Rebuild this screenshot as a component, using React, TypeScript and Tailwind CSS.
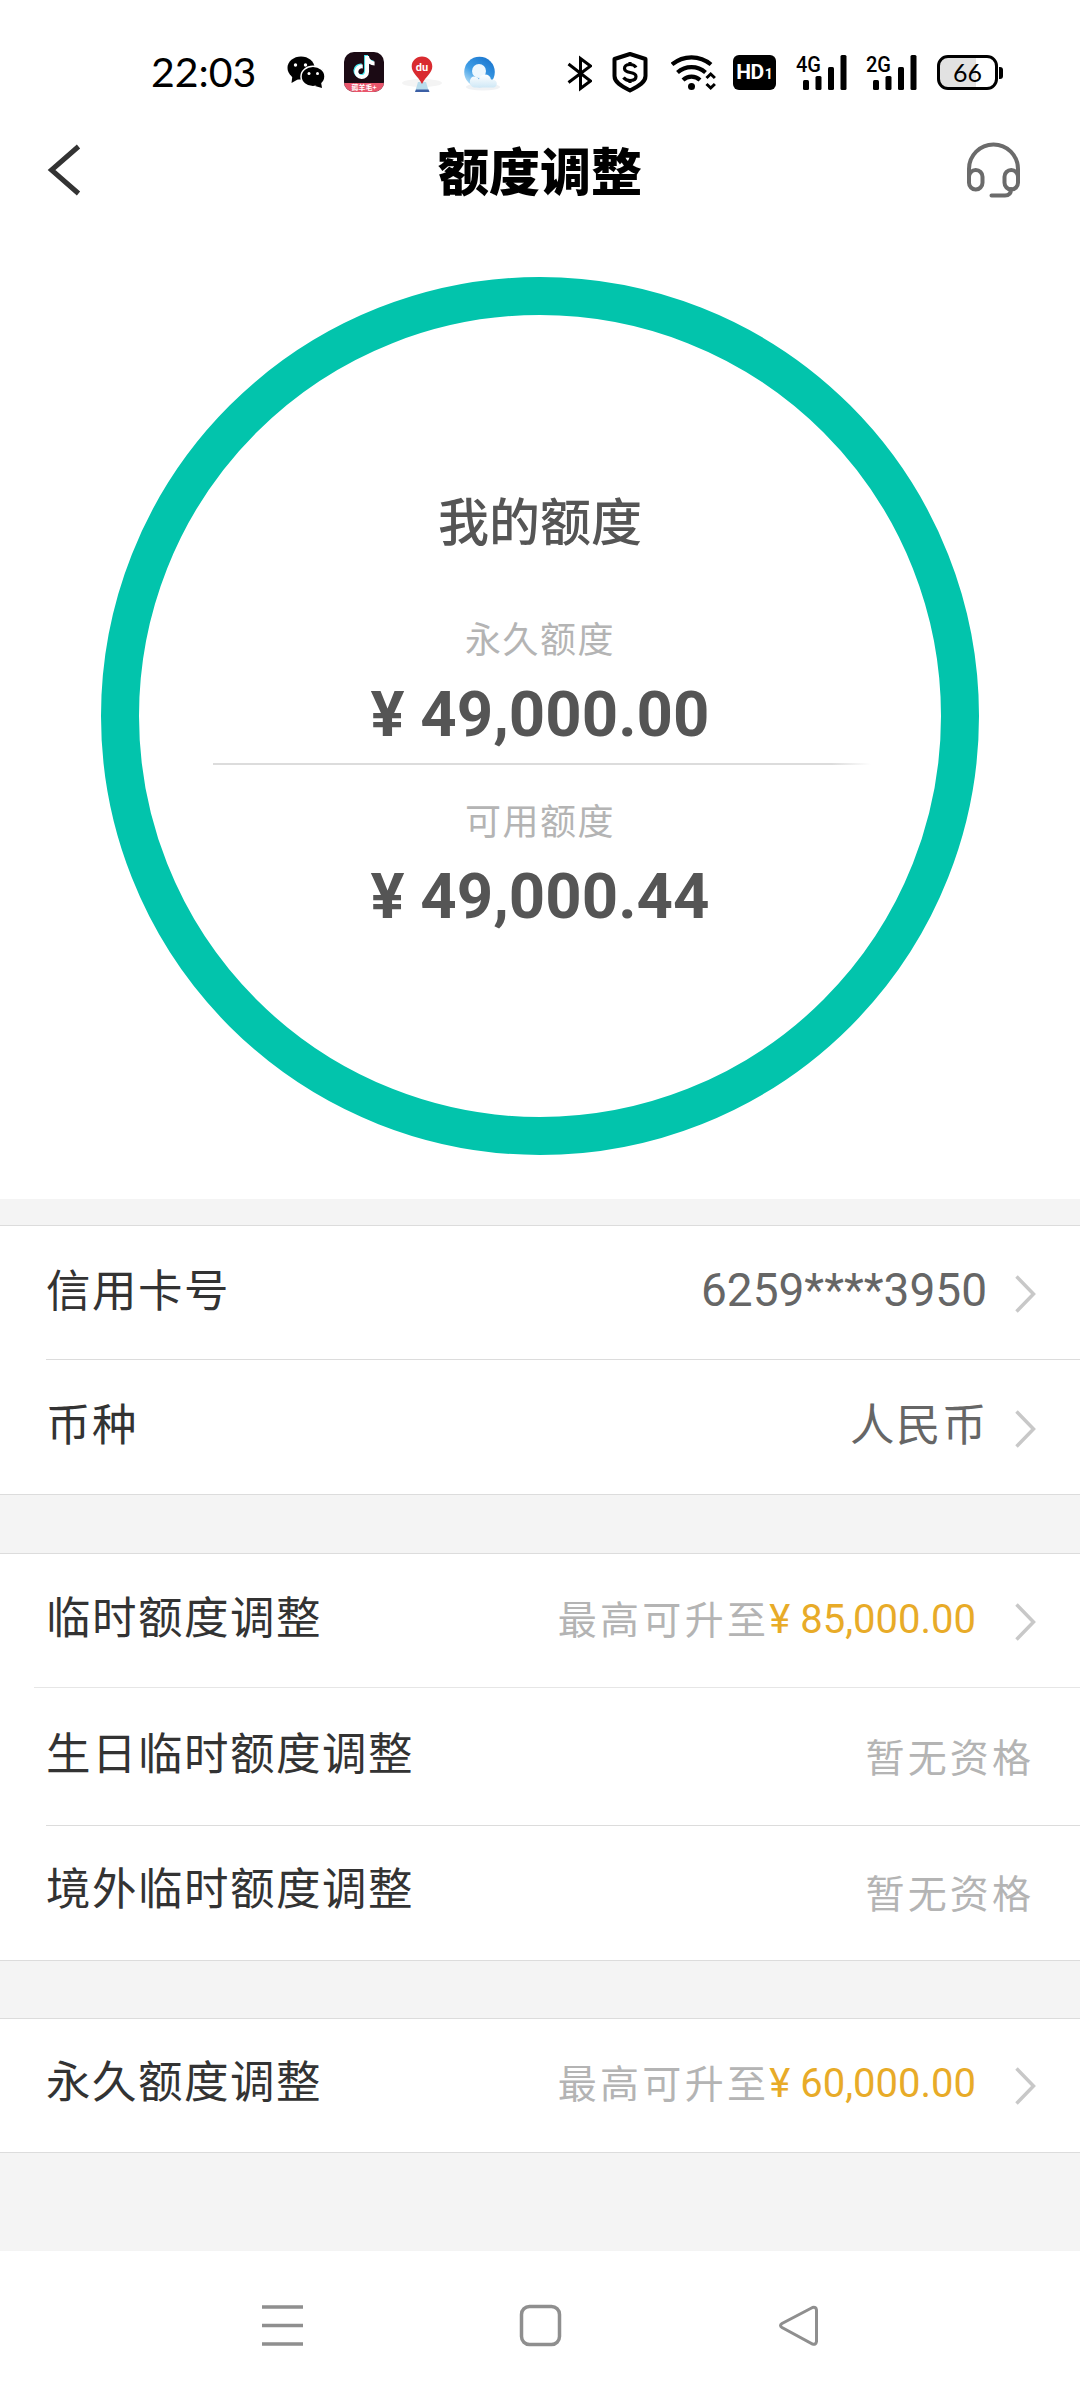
import type { ReactNode } from "react";
import { FaTiktok } from "react-icons/fa";

interface RowProps {
  label: string;
  children: ReactNode;
  arrow?: boolean;
  className?: string;
}

function SignalIcon({ label }: { label: string }) {
  return (
    <svg className="h-11 w-[52px]" viewBox="0 50 52 44">
      <text x="0" y="72" fontFamily="Roboto" fontSize="22" fontWeight="500" textLength="25" lengthAdjust="spacingAndGlyphs">
        {label}
      </text>
      <rect x="7" y="80" width="6" height="10" rx="1.5" />
      <rect x="19.5" y="76" width="6" height="14" rx="1.5" />
      <rect x="32" y="67" width="6" height="23" rx="1.5" />
      <rect x="44.5" y="55" width="6" height="35" rx="1.5" />
    </svg>
  );
}

function StatusBar() {
  return (
    <header className="flex h-[110px] items-start pt-[50px] pl-[151px] text-black">
      <span className="w-[106px] font-[Lato] text-[41px] leading-[44px] whitespace-nowrap">22:03</span>

      <svg className="ml-[30px] h-11 w-[40px]" viewBox="287 50 40 44">
        <ellipse cx="301" cy="68" rx="13.500" ry="11.500" />
        <path d="M292.500 75l-1 8 7-4z" />
        <ellipse cx="313" cy="76.500" rx="12" ry="10.300" stroke="#fff" strokeWidth="1.500" />
        <path d="M315 86l7 2-1-6z" />
        <g fill="#fff">
          <circle cx="295.500" cy="65" r="1.700" />
          <circle cx="305.500" cy="65" r="1.700" />
          <circle cx="309" cy="73.500" r="1.500" />
          <circle cx="317.500" cy="73.500" r="1.500" />
        </g>
      </svg>

      <div className="mt-[2px] ml-[17px] flex h-10 w-10 flex-col overflow-hidden rounded-[10px] bg-[#1b0a14]">
        <div className="flex h-[31px] items-center justify-center text-white">
          <FaTiktok className="h-[23px] w-[21px] drop-shadow-[-1px_-1px_0_#4de8f0]" />
        </div>
        <div className="flex h-[9px] items-center justify-center bg-[#e8566c] font-['Noto_Sans_CJK_SC'] text-[7px] leading-none font-bold text-white">
          薅羊毛+
        </div>
      </div>

      <svg className="ml-[16px] h-11 w-[44px]" viewBox="400 50 44 44">
        <ellipse cx="422" cy="83" rx="20" ry="4" fill="#f4f4f4" />
        <path d="M418 82h8l3 10h-14z" fill="#b9dcec" />
        <path d="M416 89.500h12.500l1 2.500h-14.500z" fill="#3b5fa5" />
        <path d="M422 56.500c-6 0-10.300 4.500-10.300 10C411.700 73 418 76 422 84c4-8 10.300-11 10.300-17.500 0-5.500-4.300-10-10.300-10z" fill="#d92b30" />
        <text x="422" y="70.500" fill="#fff" textAnchor="middle" fontFamily="Roboto" fontSize="11" fontWeight="700">du</text>
      </svg>

      <svg className="ml-[17px] h-11 w-[42px]" viewBox="461 50 42 44">
        <defs>
          <linearGradient id="browserRing" x1="0" y1="1" x2=".7" y2="0">
            <stop offset=".1" stopColor="#bfe4f8" />
            <stop offset=".5" stopColor="#3f9ee6" />
            <stop offset="1" stopColor="#1c78d0" />
          </linearGradient>
          <linearGradient id="browserCloud" x1="0" y1="0" x2="0" y2="1">
            <stop offset="0" stopColor="#fff" />
            <stop offset="1" stopColor="#cfe8f6" />
          </linearGradient>
        </defs>
        <ellipse cx="483" cy="87" rx="17" ry="3.500" fill="#f0f2f4" />
        <circle cx="479.500" cy="72" r="15.300" fill="url(#browserRing)" />
        <circle cx="479" cy="71" r="7" fill="#eef8fe" />
        <path d="M474 87.500a6 6 0 0 1-1-11c3 0 5 1 6 3 1-6 11-7 12 0 6-1 8 6 3 8z" fill="url(#browserCloud)" />
      </svg>

      <svg className="ml-[64px] h-11 w-[25px]" viewBox="567 50 25 44" fill="none" stroke="#000" strokeWidth="3">
        <path d="M568.500 64l22 17-10 7.500V58.500l10 7.500-22 16.500" />
      </svg>

      <svg className="ml-[20px] h-11 w-[36px]" viewBox="612 50 36 44">
        <path d="M630 54l15.500 5v17c0 6-6 10-15.500 14.500C620.500 86 614.500 82 614.500 76V59z" fill="none" stroke="#000" strokeWidth="4" strokeLinejoin="round" />
        <path d="M636 67.500c-1-2-3-3-6-3-3.500 0-5.500 1.500-5.500 4 0 6 11.500 2 11.500 8 0 2.500-2.500 4-6 4-3 0-5-1-6.500-3M630 62v3M630 80v3" fill="none" stroke="#000" strokeWidth="3.200" />
      </svg>

      <svg className="ml-[23px] h-11 w-[46px]" viewBox="671 50 46 44" fill="none" stroke="#000">
        <path d="M672 64.500a30 30 0 0 1 39 0M677.500 72.500a21 21 0 0 1 28 0M683 80a12.500 12.500 0 0 1 17 0" strokeWidth="4.200" />
        <circle cx="691.500" cy="86.500" r="3.500" fill="#000" stroke="none" />
        <path d="M706.500 78l4.200-4 4.200 4M706.500 84l4.200 4 4.200-4" strokeWidth="3" />
      </svg>

      <div className="mt-[5px] ml-[16px] flex h-[35px] w-[43px] items-baseline justify-center gap-px rounded-[6px] bg-black font-[Roboto] leading-[35px] font-bold text-white">
        <span className="text-[21px] tracking-[-0.5px]">HD</span>
        <span className="text-[14px]">1</span>
      </div>

      <div className="ml-[20px] flex gap-[18px]">
        <SignalIcon label="4G" />
        <SignalIcon label="2G" />
      </div>

      <div className="mt-[5px] ml-[19px] flex items-center">
        <div className="flex h-[35px] w-[61px] items-center justify-center rounded-[11px] border-3 border-black bg-linear-to-r from-[#e2e2e2] from-66% to-white to-66% font-[Lato] text-[25px] leading-none">
          66
        </div>
        <div className="ml-px h-[12px] w-[4px] rounded-r-[3px] bg-black" />
      </div>
    </header>
  );
}

function TitleBar() {
  return (
    <div className="flex h-[120px] items-center justify-between pr-[58px] pl-[47px]">
      <svg className="h-[52px] w-[35px]" viewBox="0 0 35 52" fill="none" stroke="#333" strokeWidth="5">
        <path d="M31.500 2.500L4.500 26l27 23.500" />
      </svg>
      <h1 className="mt-[-1px] ml-[32px] text-[51px] leading-none font-black text-black">额度调整</h1>
      <svg className="h-[58px] w-[56px]" viewBox="966 140 56 58" fill="none" stroke="#6b6b6b" strokeWidth="4">
        <path d="M969 178v-10a24.500 24.500 0 0 1 49 0v10" />
        <rect x="969" y="169" width="13.500" height="19.500" rx="6.700" />
        <rect x="1004.500" y="169" width="13.500" height="19.500" rx="6.700" />
        <path d="M1011 188c0 4-2 6.500-6 6.500h-13.500" strokeLinecap="round" />
      </svg>
    </div>
  );
}

function LimitRing() {
  return (
    <section className="flex h-[969px] justify-center pt-[47px]">
      <div className="flex h-[878px] w-[878px] flex-col items-center rounded-full border-[38px] border-[#02c4ac]">
        <h2 className="mt-[178px] text-[51px] leading-[52px] font-medium text-[#555]">我的额度</h2>
        <p className="mt-[74px] text-[36px] leading-[36px] tracking-[1.5px] text-[#b4b4b4]">永久额度</p>
        <p className="mt-[28px] font-[Roboto] text-[63.5px] leading-[64px] font-bold text-[#555]">¥ 49,000.00</p>
        <div className="mt-[16px] ml-[3px] h-[2px] w-[658px] bg-linear-to-r from-[#dcdcdc] from-94% to-white" />
        <p className="mt-[36px] text-[36px] leading-[36px] tracking-[1.5px] text-[#b4b4b4]">可用额度</p>
        <p className="mt-[28px] font-[Roboto] text-[63.5px] leading-[64px] font-bold text-[#555]">¥ 49,000.44</p>
      </div>
    </section>
  );
}

function Row({ label, children, arrow = false, className = "h-[134px]" }: RowProps) {
  return (
    <div className={`flex items-center pr-[44px] pl-[46px] ${className}`}>
      <span className="mt-[-9px] flex-1 text-[44.5px] leading-none tracking-[1.5px] text-[#333]">{label}</span>
      {children}
      {arrow && (
        <svg className="mt-[3px] h-[38px] w-[21px]" viewBox="0 0 21 38" fill="none" stroke="#c8c8c8" strokeWidth="3.500">
          <path d="M1.500 1.500L18.500 19l-17 17.500" />
        </svg>
      )}
    </div>
  );
}

function Quota({ amount }: { amount: string }) {
  return (
    <span className="mr-[39px] flex items-center text-[39px] leading-none text-[#b4b4b4]">
      <span className="mt-[-5px] tracking-[3.3px]">最高可升至</span>
      <span className="font-[Roboto] text-[40px] text-[#e8ab28]">¥ {amount}</span>
    </span>
  );
}

function Unavailable() {
  return <span className="mr-[2px] text-[39px] leading-none tracking-[3.1px] text-[#b4b4b4]">暂无资格</span>;
}

function NavBar() {
  return (
    <nav className="flex h-[149px] items-start bg-white pt-[53px] pl-[261px] text-[#8f8f8f]">
      <svg className="h-[43px] w-[43px]" viewBox="0 0 43 43" fill="none" stroke="currentColor" strokeWidth="3.500">
        <path d="M1 3h41M1 21.500h41M1 40h41" />
      </svg>
      <svg className="ml-[215px] h-[43px] w-[43px]" viewBox="0 0 43 43" fill="none" stroke="currentColor" strokeWidth="3.500">
        <rect x="2.500" y="2.500" width="38" height="38" rx="8" />
      </svg>
      <svg className="ml-[215px] h-[43px] w-[43px]" viewBox="0 0 43 43" fill="none" stroke="currentColor" strokeWidth="3">
        <path d="M35.500 3.500L5 19.500q-3 2 0 4l30.500 16.500q3.500 1 4-2.500V6q-.5-3.500-4-2.500z" />
      </svg>
    </nav>
  );
}

export default function App() {
  return (
    <div className="min-h-[2400px] w-[1080px] bg-white font-['Noto_Sans_CJK_SC',sans-serif]">
      <StatusBar />
      <TitleBar />
      <LimitRing />

      <main className="flex h-[1052px] flex-col bg-[#f4f4f4] pt-[26px]">
        <section className="border-y border-[#dcdcdc] bg-white">
          <Row label="信用卡号" className="h-[133px]" arrow>
            <span className="mt-[-5px] mr-[28px] font-[Roboto] text-[46px] leading-none text-[#666]">6259****3950</span>
          </Row>
          <div className="ml-[46px] h-px bg-[#dcdcdc]" />
          <Row label="币种" arrow>
            <span className="mt-[-9px] mr-[27px] text-[44.5px] leading-none tracking-[1.5px] text-[#666]">人民币</span>
          </Row>
        </section>

        <section className="mt-[58px] border-y border-[#dcdcdc] bg-white">
          <Row label="临时额度调整" className="h-[133px] pb-px" arrow>
            <Quota amount="85,000.00" />
          </Row>
          <div className="ml-[34px] h-px bg-[#e6e6e6]" />
          <Row label="生日临时额度调整" className="h-[137px] pb-[2px]">
            <Unavailable />
          </Row>
          <div className="ml-[46px] h-px bg-[#dcdcdc]" />
          <Row label="境外临时额度调整" className="h-[134px] pb-[4px]">
            <Unavailable />
          </Row>
        </section>

        <section className="mt-[57px] border-y border-[#dcdcdc] bg-white">
          <Row label="永久额度调整" className="h-[133px] pb-[3px]" arrow>
            <Quota amount="60,000.00" />
          </Row>
        </section>
      </main>

      <NavBar />
    </div>
  );
}
